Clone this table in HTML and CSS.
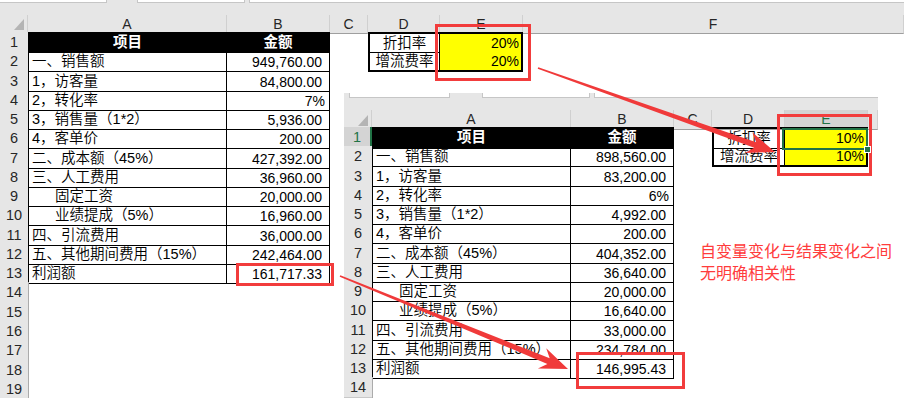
FILE: index.html
```html
<!DOCTYPE html>
<html lang="zh-CN">
<head>
<meta charset="utf-8">
<title>利润测算对比</title>
<link rel="stylesheet" href="styles.css">
</head>
<body>
<div class="page">
  <div class="sheet s1">
    <div class="bar"><span class="box b1"></span><span class="box b2"></span><span class="box b3"></span></div>
    <div class="row colhdr">
      <div class="corner"><svg width="10" height="11" viewBox="0 0 10 11"><polygon points="10,0 10,11 0,11" fill="#b4b4b4"/></svg></div>
      <div class="ch">A</div><div class="ch">B</div><div class="ch">C</div><div class="ch">D</div><div class="ch">E</div><div class="ch">F</div>
    </div>
    <div class="row"><div class="rh">1</div><div class="c ca t hd">项目</div><div class="c t hd">金额</div><div class="c"></div><div class="c dt1">折扣率</div><div class="c et1">20%</div></div>
    <div class="row"><div class="rh">2</div><div class="c ca t txt">一、销售额</div><div class="c t num">949,760.00</div><div class="c"></div><div class="c dt2">增流费率</div><div class="c et2">20%</div></div>
    <div class="row"><div class="rh">3</div><div class="c ca t txt">1，访客量</div><div class="c t num">84,800.00</div></div>
    <div class="row"><div class="rh">4</div><div class="c ca t txt">2，转化率</div><div class="c t pct">7%</div></div>
    <div class="row"><div class="rh">5</div><div class="c ca t txt">3，销售量（1*2）</div><div class="c t num">5,936.00</div></div>
    <div class="row"><div class="rh">6</div><div class="c ca t txt">4，客单价</div><div class="c t num">200.00</div></div>
    <div class="row"><div class="rh">7</div><div class="c ca t txt">二、成本额（45%）</div><div class="c t num">427,392.00</div></div>
    <div class="row"><div class="rh">8</div><div class="c ca t txt">三、人工费用</div><div class="c t num">36,960.00</div></div>
    <div class="row"><div class="rh">9</div><div class="c ca t ind">固定工资</div><div class="c t num">20,000.00</div></div>
    <div class="row"><div class="rh">10</div><div class="c ca t ind">业绩提成（5%）</div><div class="c t num">16,960.00</div></div>
    <div class="row"><div class="rh">11</div><div class="c ca t txt">四、引流费用</div><div class="c t num">36,000.00</div></div>
    <div class="row"><div class="rh">12</div><div class="c ca t txt">五、其他期间费用（15%）</div><div class="c t num">242,464.00</div></div>
    <div class="row"><div class="rh">13</div><div class="c ca t txt">利润额</div><div class="c t num">161,717.33</div></div>
    <div class="row"><div class="rh">14</div><div class="c ca"></div></div>
    <div class="row"><div class="rh">15</div><div class="c ca"></div></div>
    <div class="row"><div class="rh">16</div><div class="c ca"></div></div>
    <div class="row"><div class="rh">17</div><div class="c ca"></div></div>
    <div class="row"><div class="rh">18</div><div class="c ca"></div></div>
    <div class="row"><div class="rh">19</div><div class="c ca"></div></div>
  </div>

  <div class="sheet s2">
    <div class="bar"><span class="box b1"></span><span class="box b2"></span><span class="box b3"></span></div>
    <div class="row colhdr">
      <div class="corner"><svg width="10" height="11" viewBox="0 0 10 11"><polygon points="10,0 10,11 0,11" fill="#b4b4b4"/></svg></div>
      <div class="ch">A</div><div class="ch">B</div><div class="ch">C</div><div class="ch">D</div><div class="ch chsel">E</div><div class="ch"></div>
    </div>
    <div class="row"><div class="rh rhsel">1</div><div class="c ca t hd">项目</div><div class="c t hd">金额</div><div class="c"></div><div class="c dt1">折扣率</div><div class="c et1 sel">10%</div></div>
    <div class="row"><div class="rh">2</div><div class="c ca t txt">一、销售额</div><div class="c t num">898,560.00</div><div class="c"></div><div class="c dt2">增流费率</div><div class="c et2">10%</div></div>
    <div class="row"><div class="rh">3</div><div class="c ca t txt">1，访客量</div><div class="c t num">83,200.00</div></div>
    <div class="row"><div class="rh">4</div><div class="c ca t txt">2，转化率</div><div class="c t pct">6%</div></div>
    <div class="row"><div class="rh">5</div><div class="c ca t txt">3，销售量（1*2）</div><div class="c t num">4,992.00</div></div>
    <div class="row"><div class="rh">6</div><div class="c ca t txt">4，客单价</div><div class="c t num">200.00</div></div>
    <div class="row"><div class="rh">7</div><div class="c ca t txt">二、成本额（45%）</div><div class="c t num">404,352.00</div></div>
    <div class="row"><div class="rh">8</div><div class="c ca t txt">三、人工费用</div><div class="c t num">36,640.00</div></div>
    <div class="row"><div class="rh">9</div><div class="c ca t ind">固定工资</div><div class="c t num">20,000.00</div></div>
    <div class="row"><div class="rh">10</div><div class="c ca t ind">业绩提成（5%）</div><div class="c t num">16,640.00</div></div>
    <div class="row"><div class="rh">11</div><div class="c ca t txt">四、引流费用</div><div class="c t num">33,000.00</div></div>
    <div class="row"><div class="rh">12</div><div class="c ca t txt">五、其他期间费用（15%）</div><div class="c t num">234,784.00</div></div>
    <div class="row"><div class="rh">13</div><div class="c ca t txt">利润额</div><div class="c t num">146,995.43</div></div>
    <div class="row"><div class="rh">14</div><div class="c ca"></div></div>
  </div>

  <div class="mark m1"></div>
  <div class="mark m2"></div>
  <div class="mark m3"></div>
  <div class="mark m4"></div>

  <svg class="arrows" width="904" height="398" viewBox="0 0 904 398">
    <polygon fill="#f03a3a" points="537.7,68.8 754.2,147.8 744.9,153.0 775,152 752.3,132.3 756.2,142.2 538.3,67.3"/>
    <polygon fill="#f03a3a" points="339.7,276.7 547.4,363.9 537.9,368.6 568,369 546.2,348.2 549.7,358.3 340.3,275.3"/>
  </svg>

  <p class="note">自变量变化与结果变化之间<br>无明确相关性</p>
</div>
</body>
</html>
```

FILE: styles.css
```css
html, body {
  margin: 0;
  padding: 0;
  background: #fff;
}

.page {
  position: relative;
  width: 904px;
  height: 398px;
  overflow: hidden;
  background: #fff;
}

.sheet {
  font-family: "Liberation Sans", "Noto Sans CJK SC", sans-serif;
  font-size: 14.5px;
  font-weight: 350;
  color: #000;
  background: #fff;
}

.s2 {
  position: absolute;
  left: 344px;
  top: 93px;
  width: 534px;
}

/* formula bar remnants */
.bar {
  display: flex;
  align-items: flex-start;
  background: #e6e6e6;
  overflow: hidden;
}
.s1 .bar { height: 15px; }
.s2 .bar { height: 17px; }

.box {
  display: block;
  box-sizing: border-box;
  background: #fff;
  border: 1px solid #c6c6c6;
  border-top: none;
}
.s1 .box { height: 3px; }
.s2 .box { height: 5px; }
.s1 .b1 { margin-left: -1px; width: 108px; }
.s1 .b2 { margin-left: 30px; width: 108px; }
.s1 .b3 { margin-left: 4px; flex: 1; margin-right: -2px; }
.s2 .b1 { margin-left: 5px; width: 101px; }
.s2 .b2 { margin-left: 32px; width: 108px; }
.s2 .b3 { margin-left: 4px; flex: 1; margin-right: -2px; }

/* grid rows */
.row {
  display: grid;
  height: 19.28px;
}
.s1 .row { grid-template-columns: 28px 199px 103px 38px 72px 83px 381px; }
.s2 .row { grid-template-columns: 28px 199px 103px 38px 73px 83px 10px; }

.s1 .row.colhdr, .s2 .row.colhdr { height: 17px; }

.corner {
  box-sizing: border-box;
  background: #e6e6e6;
  border-right: 1px solid #d0d0d0;
  border-bottom: 1px solid #9f9f9f;
  display: flex;
  justify-content: flex-end;
  align-items: flex-end;
  padding: 0 3px 3px 0;
}
.corner svg { display: block; }

.ch {
  box-sizing: border-box;
  background: #e6e6e6;
  border-right: 1px solid #d0d0d0;
  border-bottom: 1px solid #9f9f9f;
  text-align: center;
  font-size: 14px;
  font-weight: 400;
  line-height: 18px;
  color: #262626;
}
.chsel {
  background: #d4d4d4;
  color: #217346;
  border-bottom: 2px solid #217346;
}

.rh {
  box-sizing: border-box;
  background: #e6e6e6;
  border-bottom: 1px solid #c8c8c8;
  text-align: center;
  line-height: 20px;
  font-size: 14.5px;
  font-weight: 400;
  color: #262626;
}
.rhsel {
  background: #d4d4d4;
  color: #217346;
  border-right: 2px solid #217346;
}

.c {
  box-sizing: border-box;
  overflow: hidden;
  white-space: nowrap;
  line-height: 20px;
}
.ca { border-left: 1px solid #ababab; }
.t {
  border-right: 1px solid #000;
  border-bottom: 1px solid #000;
}
.ca.t { border-left-color: #000; }

.hd {
  background: #000;
  color: #fff;
  font-weight: bold;
  text-align: center;
}
.txt { padding-left: 3px; }
.ind { padding-left: 26px; }
.num {
  text-align: right;
  padding-right: 7px;
  font-size: 14px;
  font-weight: 400;
  line-height: 22px;
}
.pct {
  text-align: right;
  padding-right: 4px;
  font-size: 14px;
  font-weight: 400;
  line-height: 22px;
}

/* small D/E table */
.dt1, .dt2, .et1, .et2 { border: 0 solid #000; }
.dt1 {
  border-top-width: 2px;
  border-left-width: 2px;
  border-right-width: 1px;
  border-bottom-width: 1px;
  text-align: center;
  line-height: 18px;
}
.dt2 {
  border-left-width: 2px;
  border-right-width: 1px;
  border-bottom-width: 2px;
  text-align: center;
}
.et1, .et2 {
  background: #ffff00;
  text-align: right;
  padding-right: 2px;
  font-size: 14px;
  font-weight: 400;
}
.et1 {
  border-top-width: 2px;
  border-right-width: 2px;
  border-bottom-width: 1px;
  line-height: 19px;
}
.et2 {
  border-right-width: 2px;
  border-bottom-width: 2px;
  line-height: 20px;
}

.sel {
  position: relative;
  overflow: visible;
}
.sel::after {
  content: "";
  position: absolute;
  left: -3px;
  top: -1px;
  right: -2px;
  bottom: -2px;
  border: 2px solid #217346;
}
.sel::before {
  content: "";
  position: absolute;
  right: -5px;
  bottom: -5px;
  width: 5px;
  height: 5px;
  background: #217346;
  border: 1px solid #fff;
  z-index: 1;
}

/* annotations */
.mark {
  position: absolute;
  box-sizing: border-box;
  border: 3px solid #f23c3c;
}
.m1 { left: 236px; top: 263px; width: 98px; height: 23px; }
.m2 { left: 435px; top: 24px; width: 96px; height: 57px; }
.m3 { left: 777px; top: 114px; width: 95px; height: 62px; }
.m4 { left: 576px; top: 352px; width: 109px; height: 37px; }

.arrows {
  position: absolute;
  left: 0;
  top: 0;
  pointer-events: none;
}

.note {
  position: absolute;
  left: 700px;
  top: 239px;
  margin: 0;
  font-family: "Noto Sans CJK SC", sans-serif;
  font-size: 16px;
  line-height: 22px;
  color: #ff3c3c;
}
```
